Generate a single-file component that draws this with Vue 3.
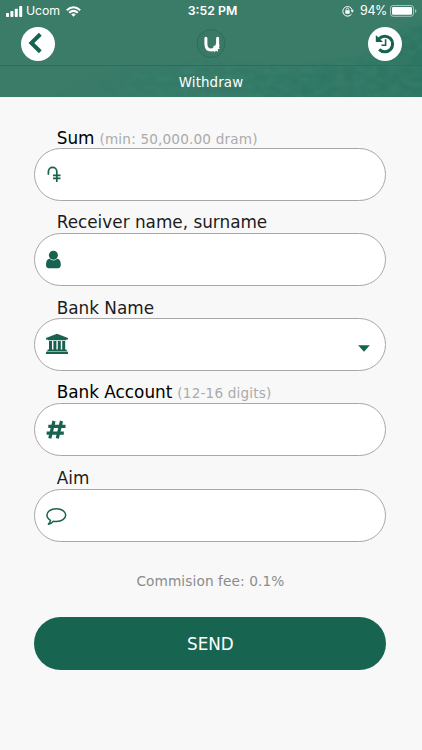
<script setup>
const fields = [
  { id: 'sum', label: 'Sum', hint: '(min: 50,000.00 dram)' },
  { id: 'receiver', label: 'Receiver name, surname' },
  { id: 'bank', label: 'Bank Name' },
  { id: 'account', label: 'Bank Account', hint: '(12-16 digits)' },
  { id: 'aim', label: 'Aim' },
]
</script>

<template>
  <div class="screen">
    <header class="header">
      <svg class="texture" viewBox="0 0 422 97" aria-hidden="true">
        <defs>
          <filter id="grain" x="0" y="0" width="100%" height="100%">
            <feTurbulence type="fractalNoise" baseFrequency="0.09 0.16" numOctaves="3" seed="8" result="n" />
            <feColorMatrix in="n" type="matrix" values="0 0 0 0 0.08  0 0 0 0 0.36  0 0 0 0 0.29  1.6 0 0 0 -0.45" />
            <feComposite in2="SourceGraphic" operator="in" />
            <feGaussianBlur stdDeviation="0.8" />
          </filter>
          <filter id="soft" x="-10%" y="-20%" width="120%" height="140%"><feGaussianBlur stdDeviation="3" /></filter>
          <linearGradient id="fade" x1="0" x2="1">
            <stop offset="0" stop-color="#25705d" stop-opacity="0.1" />
            <stop offset="0.5" stop-color="#25705d" stop-opacity="0.4" />
            <stop offset="1" stop-color="#25705d" stop-opacity="0.65" />
          </linearGradient>
          <linearGradient id="reveal" x1="0" x2="1">
            <stop offset="0" stop-color="#fff" stop-opacity="0" />
            <stop offset="0.35" stop-color="#fff" />
          </linearGradient>
        </defs>
        <path filter="url(#soft)" fill="url(#fade)" d="M50 99 85 77 125 71 180 67 210 61 250 66 300 68 340 62 365 58 390 39 404 29 430 22V99Z" />
        <path filter="url(#grain)" fill="url(#reveal)" opacity=".22" d="M60 97 90 82 130 73 180 67 210 61 250 66 300 68 340 62 365 58 390 39 404 29 422 22V97Z" />
      </svg>

      <div class="status">
        <div class="carrier">
          <svg width="17" height="11" viewBox="0 0 17 11" fill="#fff">
            <rect x="0" y="7" width="3" height="4" rx=".8" />
            <rect x="4.4" y="5" width="3" height="6" rx=".8" />
            <rect x="8.8" y="2.7" width="3" height="8.3" rx=".8" />
            <rect x="13.2" y="0" width="3" height="11" rx=".8" />
          </svg>
          <span class="carrier-name">Ucom</span>
          <svg width="15" height="11" viewBox="0 0 15 11" fill="none" stroke="#fff" stroke-width="2">
            <path d="M.8 4.2Q7.5-1.8 14.2 4.2M3.2 6.8Q7.5 3 11.8 6.8" />
            <path d="M5.2 8.3Q7.5 6.5 9.8 8.3L7.5 10.8Z" fill="#fff" stroke="none" />
          </svg>
        </div>
        <div class="time">3:52 PM</div>
        <div class="power">
          <svg width="12" height="12" viewBox="0 0 12 12" fill="none" stroke="#fff">
            <path d="M9.6 9A4.8 4.8 0 1 1 10.2 5" />
            <path d="M8.5 5.2h3.4L10.3 7.7Z" fill="#fff" stroke="none" />
            <rect x="3.3" y="5.3" width="4.4" height="3.4" rx=".4" fill="#fff" stroke="none" />
            <path d="M4.2 5.4V4.5a1.3 1.3 0 0 1 2.6 0v.9" stroke-width=".8" />
          </svg>
          <span class="percent">94%</span>
          <svg width="27" height="12" viewBox="0 0 27 12">
            <rect x=".5" y=".5" width="23" height="10.8" rx="2.6" fill="none" stroke="#fff" stroke-opacity=".55" />
            <rect x="2" y="2" width="20" height="7.8" rx="1.2" fill="#fff" />
            <path d="M25 4v4q1.4-.6 1.4-2T25 4" fill="#fff" fill-opacity=".55" />
          </svg>
        </div>
      </div>

      <nav class="nav">
        <button class="round" aria-label="Back">
          <svg width="34" height="34" viewBox="0 0 34 34" fill="none" stroke="#17634f" stroke-width="4">
            <path d="M19.3 7.3 10.4 16l8.9 8.7" />
          </svg>
        </button>
        <svg class="logo" width="30" height="30" viewBox="0 0 30 30">
          <circle cx="15" cy="14.5" r="14" fill="#34715f" fill-opacity=".25" stroke="#2f6b59" />
          <path d="M9.9 9.2v5.6c0 4.5 2.1 6.3 5.2 6.3 1.4 0 2.4-.4 3.3-1.2M21.6 9.2v7" fill="none" stroke="#fff" stroke-width="3" stroke-linecap="round" />
          <path d="M20.1 14h3v2.1l.7.8-1 1.1.9 1.7-1.9.6.2 2.4-2.1-.9-1.6 1.5-.9-1.8-2.4.1 2-2.2.8-2.6 1.6-.4z" fill="#fff" />
        </svg>
        <button class="round" aria-label="History">
          <svg width="34" height="34" viewBox="0 0 34 34" fill="none" stroke="#17634f">
            <path d="M11.2 11.6A7.8 7.8 0 1 1 11.2 22.4" stroke-width="3.1" />
            <path d="M7.8 8.1v7h7.2Z" fill="#17634f" stroke="none" />
            <path d="M17.6 12.2v6h-4.1" stroke-width="1.6" />
          </svg>
        </button>
      </nav>
      <h1 class="title">Withdraw</h1>
    </header>

    <main class="form">
      <div v-for="field in fields" :key="field.id" class="field" :class="field.id">
        <label class="label" :for="field.id"><span class="name">{{ field.label }}</span><span v-if="field.hint" class="hint">{{ field.hint }}</span></label>
        <div class="control">
          <svg v-if="field.id === 'sum'" class="icon" width="24" height="24" viewBox="0 0 24 24" fill="none" stroke="#17634f" stroke-width="1.7">
            <path d="M3.4 11.7V8.6a4.2 4.2 0 0 1 8.4 0V19M8 12.4h7.5M8 15.4h7.5" />
          </svg>
          <svg v-else-if="field.id === 'receiver'" class="icon" width="24" height="24" viewBox="0 0 24 24" fill="#17634f">
            <circle cx="8.4" cy="7.3" r="4.5" />
            <path d="M4.5 10.7Q8.4 14.3 12.3 10.7 15.8 11.2 15.8 17.1 15.8 20.2 13 20.2H3.8Q1 20.2 1 17.1 1 11.2 4.5 10.7Z" />
          </svg>
          <svg v-else-if="field.id === 'bank'" class="icon" width="24" height="24" viewBox="0 1 24 24" fill="#17634f">
            <path d="M12 1.8 23 6v1.4h-1.5q0 .8-.8.8H3.3q-.8 0-.8-.8H1V6ZM4 9h3v8.5h1.4V9h3v8.5h1.4V9h3v8.5h1.4V9h3v8.5h.8q.8 0 .8.8v.6H2.4v-.6q0-.8.8-.8H4ZM1.8 19.6h20.4q.8 0 .8.8V22H1v-1.6q0-.8.8-.8Z" />
          </svg>
          <svg v-else-if="field.id === 'account'" class="icon" width="24" height="24" viewBox="0 0 24 24" fill="none" stroke="#17634f" stroke-width="3.2">
            <path d="M9 3 4.8 20.3M16.5 3 12.3 20.3M3.3 8.3h17.2M1.6 15.2h17.2" />
          </svg>
          <svg v-else class="icon" width="24" height="24" viewBox="0 0 24 24" fill="none" stroke="#17634f" stroke-width="1.5" stroke-linejoin="round">
            <path d="M11.4 4.7C5.9 4.7 1.9 7.5 1.9 11.1c0 2.1 1.3 4 3.6 5.2-.3 1.7-1 2.8-2.1 3.9 2.1-.3 3.5-1.1 4.7-2.9 1 .2 2.1.3 3.3.3 5.3 0 9.3-2.8 9.3-6.5s-4-6.4-9.3-6.4Z" />
          </svg>
          <input :id="field.id" class="input" type="text" :readonly="field.id === 'bank'" />
          <svg v-if="field.id === 'bank'" class="caret" width="12" height="7" viewBox="0 0 12 7"><path d="M.1.2h11.7L6 6.8Z" fill="#17634f" /></svg>
        </div>
      </div>
      <p class="fee"><span>Commision fee: 0.1%</span></p>
      <button class="send">SEND</button>
    </main>
  </div>
</template>

<style>
body { margin: 0; background: #f8f8f8; }
</style>

<style scoped>
* { box-sizing: border-box; }
.screen { width: 422px; height: 750px; overflow: hidden; background: #f8f8f8; font-family: "DejaVu Sans", Verdana, sans-serif; }
.header { position: relative; height: 97px; background: #3b7c69; color: #fff; }
.texture { position: absolute; inset: 0; width: 422px; height: 97px; }
.status { position: relative; display: grid; grid-template-columns: 1fr 80px 1fr; height: 22px; padding: 0 5px 0 6px; font-family: Inter, "Liberation Sans", sans-serif; }
.carrier, .power { display: flex; align-items: center; }
.carrier-name { width: 40px; margin-left: 3px; font-size: 12.3px; letter-spacing: -.1px; line-height: 22px; }
.time { padding-left: 2px; text-align: center; font-size: 12.3px; font-weight: 600; line-height: 22px; white-space: nowrap; }
.power { justify-content: flex-end; }
.percent { margin: 0 3px 0 6px; font-size: 12.5px; letter-spacing: -.4px; line-height: 22px; }
.nav { position: relative; display: flex; justify-content: space-between; align-items: center; height: 44px; padding: 0 20.5px; border-bottom: 1px solid #2f6d5b; }
.round { width: 34px; height: 34px; border: 0; border-radius: 50%; padding: 0; background: #fff; }
.round svg { display: block; }
.title { position: relative; margin: 0; height: 31px; line-height: 33px; text-align: center; font-size: 13.4px; font-weight: 400; letter-spacing: .1px; }
.form { display: flex; flex-direction: column; padding: 31px 35.6px 0 34.4px; }
.field { display: flex; flex-direction: column; justify-content: flex-end; height: 85px; }
.field.sum { height: 73px; }
.field.aim { height: 86px; }
.label { height: 20px; padding-left: 22.3px; line-height: 20px; white-space: nowrap; color: #1c1c1c; }
.sum .label { color: #000; }
.receiver .label { height: 21px; }
.account .label { height: 21px; color: #000; }
.aim .label { height: 21px; }
.name { font-size: 16.85px; }
.hint { margin-left: 5px; font-size: 13.6px; letter-spacing: .18px; color: #ababab; }
.control { display: flex; align-items: center; height: 53px; padding: 0 15px 0 9.3px; border: 1px solid #a7a7a7; border-radius: 27px; background: #fff; }
.icon { flex: none; }
.input { flex: 1; min-width: 0; height: 40px; border: 0; padding: 0 8px; outline: 0; background: transparent; font: inherit; }
.caret { flex: none; margin-top: 8px; }
.fee { margin: 29px 0 0; height: 20px; line-height: 20px; text-align: center; font-size: 13.7px; letter-spacing: .1px; color: #8b8b8b; }
.send { height: 53px; margin-top: 26px; border: 0; border-radius: 27px; background: #176451; color: #fff; font-family: inherit; font-size: 16.8px; }
</style>
